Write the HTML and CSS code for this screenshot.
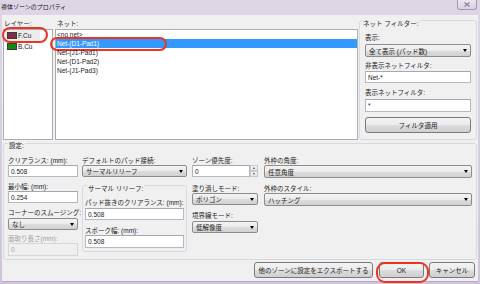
FILE: index.html
```html
<!DOCTYPE html>
<html lang="ja">
<head>
  <meta charset="UTF-8">
  <title>導体ゾーンのプロパティ</title>
  <link rel="stylesheet" href="styles.css">
</head>
<body>
  <div class="window">
    <div class="titlebar">
      <span class="title">導体ゾーンのプロパティ</span>
      <span class="close-btn">
        <svg width="6" height="5" viewBox="0 0 6 5"><path d="M0.5 0.5 L5.5 4.5 M5.5 0.5 L0.5 4.5" stroke="#8a8294" stroke-width="1.2"/></svg>
      </span>
    </div>

    <div class="client">
      <div class="top-row">
        <div class="layer-col">
          <div class="caption">レイヤー:</div>
          <div class="listbox">
            <div class="layer-item selected">
              <span class="swatch fcu"></span>F.Cu
              <span class="mark mark-layer"></span>
            </div>
            <div class="layer-item">
              <span class="swatch bcu"></span>B.Cu
            </div>
          </div>
        </div>

        <div class="net-col">
          <div class="caption">ネット:</div>
          <div class="listbox">
            <div class="net-item">&lt;no net&gt;</div>
            <div class="net-item selected">
              Net-(D1-Pad1)
              <span class="mark mark-net"></span>
            </div>
            <div class="net-item">Net-(J1-Pad1)</div>
            <div class="net-item">Net-(D1-Pad2)</div>
            <div class="net-item">Net-(J1-Pad3)</div>
          </div>
        </div>

        <div class="group filter-group">
          <div class="group-title">ネット フィルター:</div>
          <div class="label f-show">表示:</div>
          <div class="combo h13 f-show-combo">全て表示 (パッド数)<span class="arrow"></span></div>
          <div class="label f-hide">非表示ネットフィルタ:</div>
          <div class="text-input h12 f-hide-input">Net-*</div>
          <div class="label f-vis">表示ネットフィルタ:</div>
          <div class="text-input h13 f-vis-input">*</div>
          <div class="button apply-btn">フィルタ適用</div>
        </div>
      </div>

      <div class="group settings-group">
        <div class="group-title">設定:</div>
        <div class="settings-cols">
          <div class="col col-clear">
            <div class="label">クリアランス: (mm):</div>
            <div class="text-input h12">0.508</div>
            <div class="label mt5">最小幅: (mm):</div>
            <div class="text-input h12">0.254</div>
            <div class="label mt5">コーナーのスムージング:</div>
            <div class="combo h12 mt1">なし<span class="arrow"></span></div>
            <div class="label disabled mt4">面取り長さ(mm):</div>
            <div class="text-input disabled h13">0</div>
          </div>

          <div class="col col-pad">
            <div class="label">デフォルトのパッド接続:</div>
            <div class="combo h12">サーマルリリーフ<span class="arrow"></span></div>
            <div class="group thermal-group">
              <div class="group-title">サーマル リリーフ:</div>
              <div class="label mt5">パッド抜きのクリアランス: (mm):</div>
              <div class="text-input h12 mt1">0.508</div>
              <div class="label mt6">スポーク幅: (mm):</div>
              <div class="text-input h13">0.508</div>
            </div>
          </div>

          <div class="col col-fill">
            <div class="label">ゾーン優先度:</div>
            <div class="spin">
              <div class="text-input h12 spin-field">0</div>
              <div class="spin-buttons">
                <span class="spin-up"></span>
                <span class="spin-down"></span>
              </div>
            </div>
            <div class="label mt7">塗り潰しモード:</div>
            <div class="combo h12">ポリゴン<span class="arrow"></span></div>
            <div class="label mt6">境界線モード:</div>
            <div class="combo h12 mt1">低解像度<span class="arrow"></span></div>
          </div>

          <div class="col col-outline">
            <div class="label">外枠の角度:</div>
            <div class="combo h13">任意角度<span class="arrow"></span></div>
            <div class="label mt6">外枠のスタイル:</div>
            <div class="combo h13">ハッチング<span class="arrow"></span></div>
          </div>
        </div>
      </div>

      <div class="button-row">
        <div class="button export-btn">他のゾーンに設定をエクスポートする</div>
        <div class="button ok-btn">OK<span class="mark mark-ok"></span></div>
        <div class="button cancel-btn">キャンセル</div>
      </div>
    </div>
  </div>
</body>
</html>
```

FILE: styles.css
```css
:root {
  --face: #f0f0f0;
  --text: #1b1b1b;
  --frame: #d2c8dd;
  --field-border: #b3b8c1;
  --ctrl-border: #8c8c8c;
  --group-border: #d5dbe0;
  --select: #3399ff;
  --mark: #ee3322;
}

* {
  box-sizing: border-box;
}

body {
  margin: 0;
  width: 480px;
  height: 284px;
  overflow: hidden;
  font-family: 'Liberation Sans', 'Noto Sans CJK JP', sans-serif;
  font-size: 6.5px;
  color: var(--text);
}

.window {
  width: 480px;
  height: 284px;
  display: flex;
  flex-direction: column;
  padding: 0 2px 2px 2px;
  background: linear-gradient(to bottom, #ded6e7, #cfc4db);
}

.titlebar {
  height: 15px;
  display: flex;
  align-items: flex-start;
  justify-content: space-between;
}

.title {
  font-size: 6px;
  line-height: 15px;
  color: #111;
  margin-left: -1px;
}

.close-btn {
  width: 20px;
  height: 10px;
  margin-right: 1px;
  border: 1px solid #a397b1;
  border-top: none;
  border-radius: 0 0 3px 3px;
  background: linear-gradient(to bottom, #ebe6f0, #d9d1e2);
  display: flex;
  align-items: center;
  justify-content: center;
}

.client {
  flex: 1;
  background: var(--face);
  padding: 4px 1px 0 1px;
  display: flex;
  flex-direction: column;
  border-bottom: 1px solid #b6aac4;
}

/* top: layers / nets / filter */

.top-row {
  display: flex;
  height: 121px;
}

.caption {
  height: 10px;
  line-height: 9px;
}

.layer-col {
  width: 50px;
  display: flex;
  flex-direction: column;
}

.layer-col .caption {
  padding-left: 1px;
}

.net-col {
  width: 303px;
  margin-left: 2px;
  display: flex;
  flex-direction: column;
}

.net-col .caption {
  padding-left: 2px;
}

.listbox {
  flex: 1;
  background: #fff;
  border: 1px solid #a9aeb6;
}

.layer-item {
  position: relative;
  height: 11px;
  width: 35px;
  margin-left: 1px;
  display: flex;
  align-items: center;
  gap: 1px;
  padding-left: 2px;
}

.layer-item.selected {
  background: #ececec;
}

.swatch {
  width: 10px;
  height: 7px;
  border: 1px solid #3a3a3a;
}

.swatch.fcu {
  background: #7e2c47;
}

.swatch.bcu {
  background: #118a11;
}

.net-item {
  position: relative;
  height: 9px;
  line-height: 9px;
  padding-left: 1px;
}

.net-item.selected {
  background: var(--select);
  color: #fff;
}

.mark {
  position: absolute;
  border: 2px solid var(--mark);
  border-radius: 8px;
  pointer-events: none;
}

.mark-layer {
  left: -3px;
  top: -3px;
  width: 46px;
  height: 16px;
}

.mark-net {
  left: -6px;
  top: -2px;
  width: 117px;
  height: 14px;
  border-radius: 7px;
}

.mark-ok {
  left: -4px;
  top: -1px;
  width: 53px;
  height: 21px;
  border-radius: 9px;
}

/* group boxes */

.group {
  border: 1px solid var(--group-border);
  border-radius: 3px;
  display: flex;
  flex-direction: column;
}

.group-title {
  align-self: flex-start;
  height: 9px;
  line-height: 9px;
  padding: 0 1px;
  background: var(--face);
}

.filter-group {
  width: 118px;
  margin-left: 1px;
  margin-top: 1px;
  padding: 0 5px;
}

.filter-group .group-title {
  margin: -2px 0 0 -3px;
}

.f-show { margin-top: 5px; }
.f-show-combo { margin-top: 2px; }
.f-hide { margin-top: 4px; }
.f-hide-input { margin-top: 1px; }
.f-vis { margin-top: 5px; }
.f-vis-input { margin-top: 2px; }

.apply-btn {
  margin-top: 5px;
  height: 16px;
}

/* controls */

.label {
  height: 9px;
  line-height: 9px;
  white-space: nowrap;
}

.label.disabled {
  color: #a3a3a3;
}

.text-input {
  background: #fff;
  border: 1px solid var(--field-border);
  border-top-color: #a4a9b1;
  padding-left: 2px;
  display: flex;
  align-items: center;
}

.text-input.disabled {
  background: var(--face);
  border-color: #d6d6d6;
  color: #a3a3a3;
}

.combo {
  border: 1px solid var(--ctrl-border);
  border-radius: 2px;
  background: linear-gradient(to bottom, #f3f3f3 0%, #ebebeb 50%, #dddddd 51%, #d1d1d1 100%);
  padding: 0 3px 0 3px;
  display: flex;
  align-items: center;
}

.arrow {
  margin-left: auto;
  width: 0;
  height: 0;
  border-left: 2px solid transparent;
  border-right: 2px solid transparent;
  border-top: 3px solid #000;
}

.button {
  position: relative;
  border: 1px solid #7a7a7a;
  border-radius: 3px;
  background: linear-gradient(to bottom, #f3f3f3 0%, #ebebeb 50%, #dddddd 51%, #cfcfcf 100%);
  display: flex;
  align-items: center;
  justify-content: center;
}

.h12 { height: 12px; }
.h13 { height: 13px; }
.mt1 { margin-top: 1px; }
.mt4 { margin-top: 4px; }
.mt5 { margin-top: 5px; }
.mt6 { margin-top: 6px; }
.mt7 { margin-top: 7px; }

/* settings */

.settings-group {
  height: 117px;
  margin-top: 3px;
  padding: 0 4px;
}

.settings-group .group-title {
  margin-top: -3px;
}

.settings-cols {
  display: flex;
  margin-top: 6px;
}

.col {
  display: flex;
  flex-direction: column;
}

.col-clear { width: 70px; }
.col-pad { width: 105px; margin-left: 4px; }
.col-fill { width: 66px; margin-left: 5px; }
.col-outline { width: 208px; margin-left: 6px; }

.thermal-group {
  margin-top: 8px;
  height: 67px;
  padding: 0 2px;
}

.thermal-group .group-title {
  margin: -2px 0 0 2px;
}

.spin {
  display: flex;
}

.spin-field {
  width: 58px;
}

.spin-buttons {
  width: 8px;
  height: 12px;
  display: flex;
  flex-direction: column;
}

.spin-up,
.spin-down {
  flex: 1;
  border: 1px solid #c6cad0;
  background: linear-gradient(to bottom, #f6f6f6, #e4e4e4);
  display: flex;
  align-items: center;
  justify-content: center;
}

.spin-up::after {
  content: '';
  border-left: 1.5px solid transparent;
  border-right: 1.5px solid transparent;
  border-bottom: 2px solid #555;
}

.spin-down::after {
  content: '';
  border-left: 1.5px solid transparent;
  border-right: 1.5px solid transparent;
  border-top: 2px solid #555;
}

/* bottom buttons */

.button-row {
  display: flex;
  justify-content: flex-end;
  margin-top: 2px;
  padding-right: 2px;
  height: 16px;
}

.export-btn { width: 119px; }
.ok-btn { width: 45px; margin-left: 6px; }
.cancel-btn { width: 46px; margin-left: 5px; }
```
